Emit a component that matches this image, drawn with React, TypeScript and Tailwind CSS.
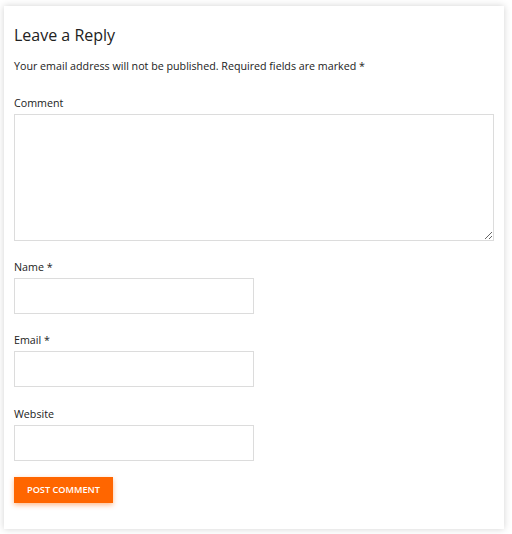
import React from 'react';

const font = { fontFamily: '"Open Sans", "Liberation Sans", sans-serif' };

function Field({ label, required, top = 'mt-[18px]' }: { label: string; required?: boolean; top?: string }) {
  return (
    <div className={`${top} flex flex-col`}>
      <label className="text-[10.7px] leading-[16px] text-[#222]">
        {label}
        {required && ' *'}
      </label>
      <input
        type="text"
        className="mt-[3px] h-[36px] w-[240px] border border-[#dcdcdc] bg-white px-2 text-[11px] outline-none"
      />
    </div>
  );
}

export default function App() {
  return (
    <div className="min-h-[534px] w-[512px] bg-white pl-[4px] pt-[6px]" style={font}>
      <div className="w-[500px] bg-white px-[10px] pb-[26px] pt-[18px] shadow-[0_0_7px_rgba(0,0,0,0.18)]">
        <h3 className="text-[16px] font-normal leading-[22px] text-[#222]">Leave a Reply</h3>
        <p className="mt-[12px] text-[10.7px] leading-[16px] text-[#222]">
          Your email address will not be published. Required fields are marked *
        </p>
        <div className="mt-[21px] flex flex-col">
          <label className="text-[10.7px] leading-[16px] text-[#222]">Comment</label>
          <textarea className="mt-[3px] block h-[127px] w-[480px] resize-y border border-[#dcdcdc] bg-white p-2 text-[11px] outline-none" />
        </div>
        <Field label="Name" required />
        <Field label="Email" required />
        <Field label="Website" top="mt-[19px]" />
        <button
          type="button"
          className="mt-[16px] h-[26px] w-[99px] bg-[#ff6600] text-[9.2px] font-semibold uppercase text-white shadow-[0_2px_5px_rgba(255,102,0,0.45)]"
        >
          Post Comment
        </button>
      </div>
    </div>
  );
}
